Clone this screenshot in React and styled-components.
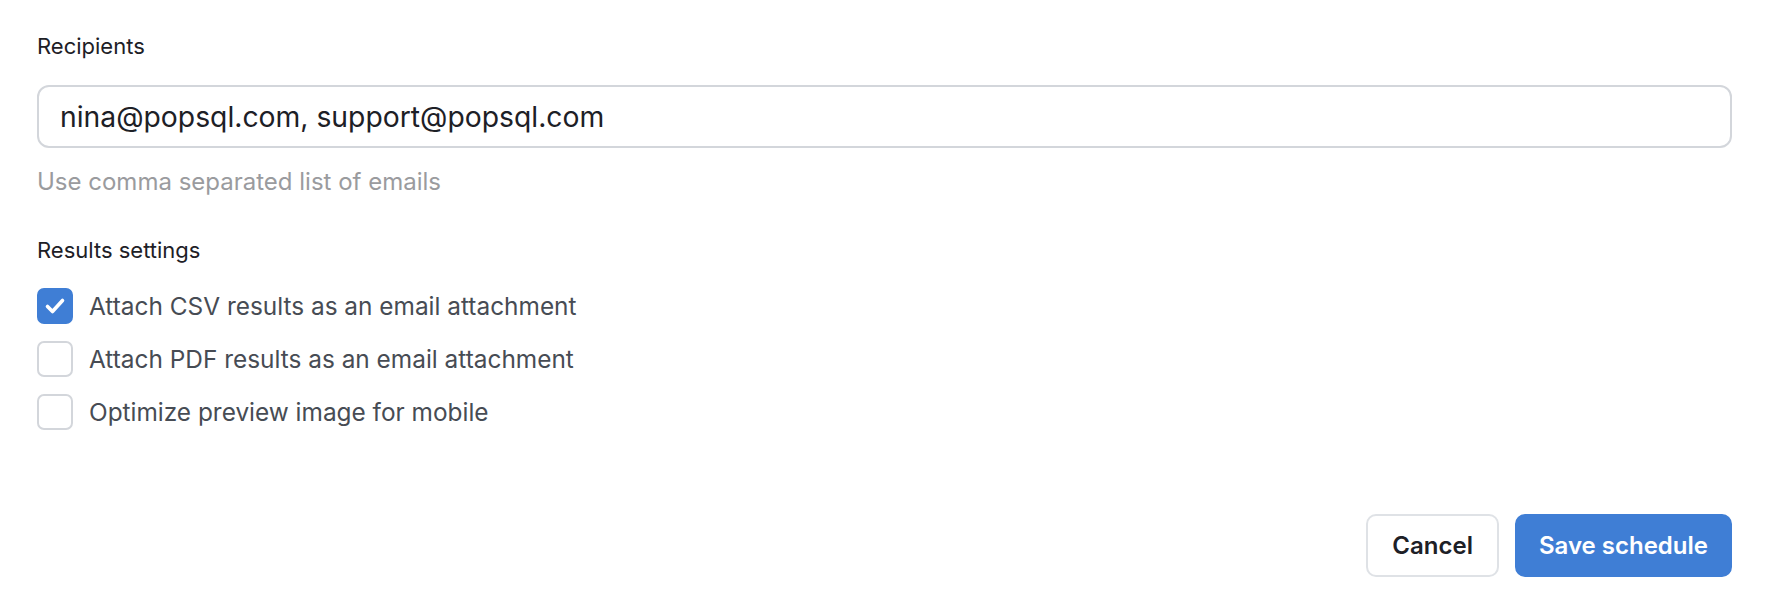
import React, { useState } from 'react'
import styled, { createGlobalStyle } from 'styled-components'

const GlobalStyle = createGlobalStyle`
  html, body {
    margin: 0;
    padding: 0;
    background: #ffffff;
  }
  body {
    font-family: Inter, 'Noto Sans', sans-serif;
    -webkit-font-smoothing: antialiased;
  }
`

const Page = styled.div`
  box-sizing: border-box;
  width: 1776px;
  height: 604px;
  padding: 34px 44px 27px 37px;
  display: flex;
  flex-direction: column;
`

const Label = styled.div`
  color: #1d2026;
  font-size: 22px;
  line-height: 24px;
  margin-top: ${props => props.top || 0}px;
  margin-bottom: ${props => props.gap || 0}px;
`

const Input = styled.input`
  box-sizing: border-box;
  width: 100%;
  height: 63px;
  padding: 0 21px;
  border: 2px solid #d3d6db;
  border-radius: 12px;
  font-family: inherit;
  font-size: 28.3px;
  color: #1d2026;
  outline: none;
`

const Hint = styled.div`
  margin-top: 20px;
  color: #9a9b9e;
  font-size: 24px;
  line-height: 28px;
`

const Options = styled.div`
  display: flex;
  flex-direction: column;
  gap: 17px;
`

const Option = styled.label`
  display: flex;
  align-items: center;
  gap: 16px;
  cursor: pointer;
  color: #474c54;
  font-size: 24.4px;
  line-height: 35px;
`

const Box = styled.span`
  box-sizing: border-box;
  flex: none;
  width: 36px;
  height: 36px;
  border-radius: 7px;
  border: 2px solid ${props => (props.checked ? '#3f7ed5' : '#d3d6db')};
  background: ${props => (props.checked ? '#3f7ed5' : '#ffffff')};
  display: flex;
  align-items: center;
  justify-content: center;
`

const Footer = styled.div`
  margin-top: auto;
  display: flex;
  justify-content: flex-end;
  gap: 16px;
`

const Button = styled.button`
  box-sizing: border-box;
  height: 63px;
  padding: 0 ${props => (props.primary ? 22 : 24)}px;
  border-radius: 10px;
  border: 2px solid ${props => (props.primary ? '#3f7ed5' : '#dfe2e6')};
  background: ${props => (props.primary ? '#3f7ed5' : '#ffffff')};
  color: ${props => (props.primary ? '#ffffff' : '#1d2026')};
  font-family: inherit;
  font-size: 24px;
  font-weight: 600;
  cursor: pointer;
`

const options = [
  { id: 'csv', text: 'Attach CSV results as an email attachment', checked: true },
  { id: 'pdf', text: 'Attach PDF results as an email attachment', checked: false },
  { id: 'mobile', text: 'Optimize preview image for mobile', checked: false }
]

function Checkbox({ checked }) {
  return (
    <Box checked={checked}>
      {checked && (
        <svg width="32" height="32" viewBox="0 0 32 32" fill="none">
          <path d="M8.5 16.5l5 5 10-11" stroke="#fff" strokeWidth="3.6" strokeLinecap="round" strokeLinejoin="round" />
        </svg>
      )}
    </Box>
  )
}

export default function App() {
  const [state, setState] = useState(() =>
    Object.fromEntries(options.map(o => [o.id, o.checked]))
  )

  return (
    <Page>
      <GlobalStyle />
      <Label gap={27}>Recipients</Label>
      <Input defaultValue="nina@popsql.com, support@popsql.com" />
      <Hint>Use comma separated list of emails</Hint>
      <Label top={42} gap={26}>Results settings</Label>
      <Options>
        {options.map(o => (
          <Option key={o.id} onClick={() => setState(s => ({ ...s, [o.id]: !s[o.id] }))}>
            <Checkbox checked={state[o.id]} />
            {o.text}
          </Option>
        ))}
      </Options>
      <Footer>
        <Button>Cancel</Button>
        <Button primary>Save schedule</Button>
      </Footer>
    </Page>
  )
}
